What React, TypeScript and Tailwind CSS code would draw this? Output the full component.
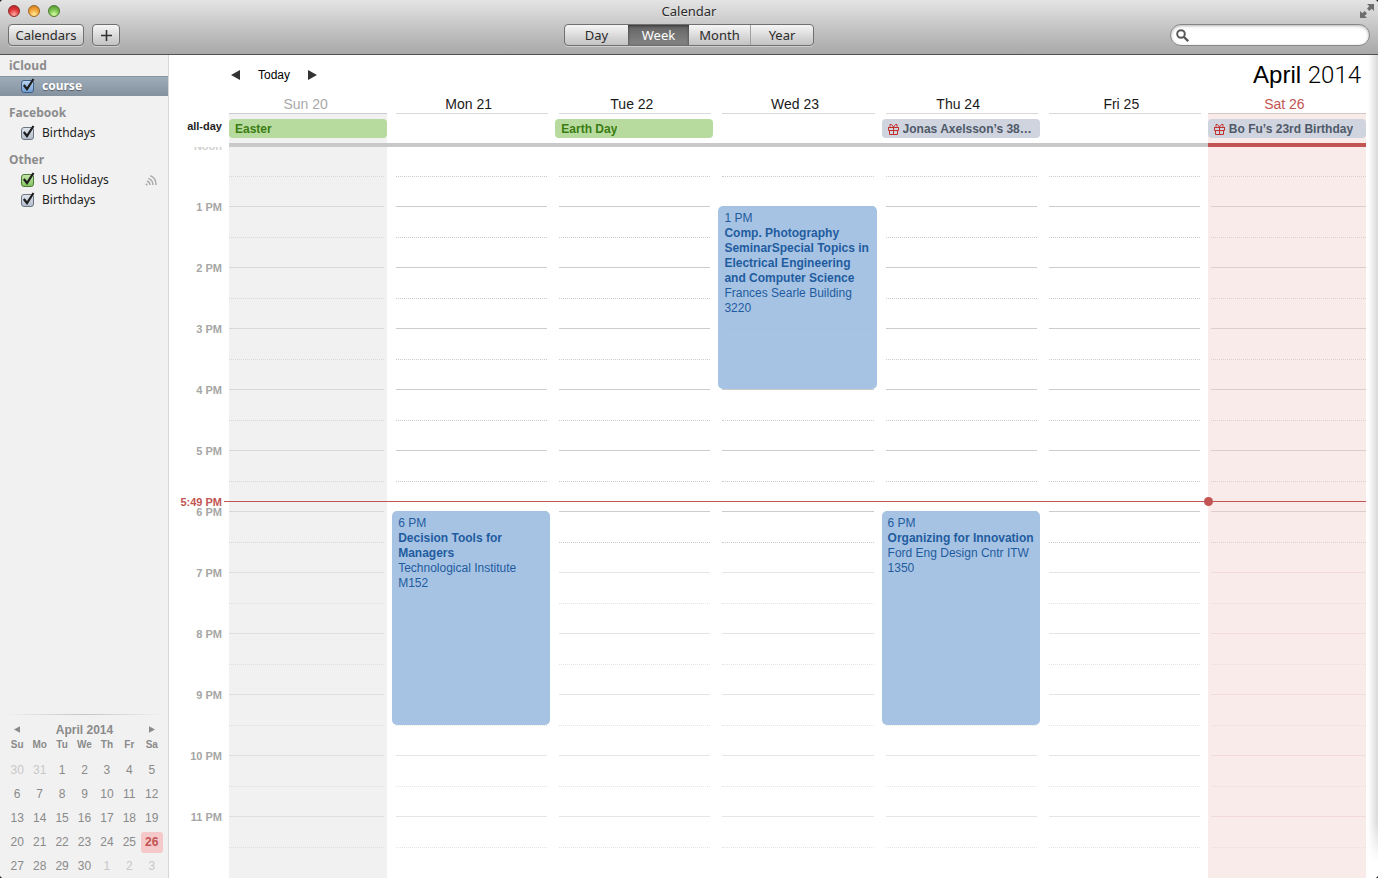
import { useState } from 'react';

interface CalendarItem {
  id: string;
  name: string;
  color: 'blue' | 'gray' | 'green';
  subscribed?: boolean;
}

interface CalendarGroup {
  title: string;
  items: CalendarItem[];
}

interface CalendarEvent {
  start: number;
  end: number;
  time: string;
  title: string;
  location: string;
}

interface Day {
  label: string;
  kind: 'past' | 'normal' | 'today';
  allDay?: { title: string; type: 'holiday' | 'birthday' };
  events: CalendarEvent[];
}

const HOUR_HEIGHT = 61;
const NOW = 5.83;

const groups: CalendarGroup[] = [
  { title: 'iCloud', items: [{ id: 'course', name: 'course', color: 'blue' }] },
  { title: 'Facebook', items: [{ id: 'fb-birthdays', name: 'Birthdays', color: 'gray' }] },
  {
    title: 'Other',
    items: [
      { id: 'us-holidays', name: 'US Holidays', color: 'green', subscribed: true },
      { id: 'birthdays', name: 'Birthdays', color: 'gray' },
    ],
  },
];

const days: Day[] = [
  { label: 'Sun 20', kind: 'past', allDay: { title: 'Easter', type: 'holiday' }, events: [] },
  {
    label: 'Mon 21',
    kind: 'normal',
    events: [
      { start: 6, end: 9.5, time: '6 PM', title: 'Decision Tools for Managers', location: 'Technological Institute M152' },
    ],
  },
  { label: 'Tue 22', kind: 'normal', allDay: { title: 'Earth Day', type: 'holiday' }, events: [] },
  {
    label: 'Wed 23',
    kind: 'normal',
    events: [
      {
        start: 1,
        end: 4,
        time: '1 PM',
        title: 'Comp. Photography SeminarSpecial Topics in Electrical Engineering and Computer Science',
        location: 'Frances Searle Building 3220',
      },
    ],
  },
  {
    label: 'Thu 24',
    kind: 'normal',
    allDay: { title: 'Jonas Axelsson’s 38th Birthday', type: 'birthday' },
    events: [
      { start: 6, end: 9.5, time: '6 PM', title: 'Organizing for Innovation', location: 'Ford Eng Design Cntr ITW 1350' },
    ],
  },
  { label: 'Fri 25', kind: 'normal', events: [] },
  { label: 'Sat 26', kind: 'today', allDay: { title: 'Bo Fu’s 23rd Birthday', type: 'birthday' }, events: [] },
];

const hours = ['Noon', '1 PM', '2 PM', '3 PM', '4 PM', '5 PM', '6 PM', '7 PM', '8 PM', '9 PM', '10 PM', '11 PM'];

const weekdays = ['Su', 'Mo', 'Tu', 'We', 'Th', 'Fr', 'Sa'];
const weeks = [
  [30, 31, 1, 2, 3, 4, 5],
  [6, 7, 8, 9, 10, 11, 12],
  [13, 14, 15, 16, 17, 18, 19],
  [20, 21, 22, 23, 24, 25, 26],
  [27, 28, 29, 30, 1, 2, 3],
];

const checkboxColors = {
  blue: 'border-[#3f5f8a] from-[#b9d3f0] to-[#6f9fd2]',
  gray: 'border-[#6b7480] from-[#dfe4ec] to-[#b3bccb]',
  green: 'border-[#4b7a35] from-[#c3e6a8] to-[#86c463]',
};

const dayBackground = {
  past: 'bg-[#f1f1f1]',
  normal: '',
  today: 'bg-[#f9ebea]',
};

const dayTitleColor = {
  past: 'text-[#a9a9a9]',
  normal: 'text-[#1a1a1a]',
  today: 'text-[#c25453]',
};

const lineMargins = {
  past: 'mr-[3px]',
  normal: 'ml-1 mr-[3px]',
  today: 'ml-[3px]',
};

// lines in the working hours are darker than those in the evening
const lineColors = {
  past: { work: 'border-black/10', evening: 'border-black/8' },
  normal: { work: 'border-black/20', evening: 'border-black/10' },
  today: { work: 'border-[#dfcccd]', evening: 'border-[#f0dadb]' },
};

function Triangle({ direction, className }: { direction: 'left' | 'right'; className: string }) {
  return (
    <svg viewBox="0 0 9 10" className={className} fill="currentColor">
      <path d={direction === 'left' ? 'M9 0v10L0 5z' : 'M0 0v10l9-5z'} />
    </svg>
  );
}

function GiftIcon() {
  return (
    <svg viewBox="0 0 11 12" className="h-3 w-[11px] shrink-0" fill="none" stroke="#c4302c">
      <path d="M1 4.500h9.500M.5 4v3.500h10V4M1.500 7.500v4h8v-4" />
      <path d="M5.500 3v8.500" />
      <path d="M5.500 4L3.500 1.500M5.500 4l2-2.500M2 3.800V1.500h1.500M9 3.800V1.500H7.500" />
    </svg>
  );
}

function FeedIcon() {
  return (
    <svg viewBox="0 0 12 12" className="h-3 w-3" fill="none" stroke="#a9a9a9" strokeWidth="1.400">
      <circle cx="1.600" cy="10.400" r="1" fill="#a9a9a9" stroke="none" />
      <path d="M2 7A4.500 4.500 0 0 1 5 11M3.500 4.300A7 7 0 0 1 7.900 11M5.200 1.700A9.500 9.500 0 0 1 10.900 11" />
    </svg>
  );
}

function TitleBar() {
  const [view, setView] = useState('Week');

  return (
    <header className="h-[55px] shrink-0 border-b border-[#515151] bg-linear-to-b from-[#e4e4e4] to-[#a8a8a8] px-2 text-[#2b2b2b]">
      <div className="grid h-6 grid-cols-[1fr_auto_1fr] items-center pb-0.5">
        <div className="flex gap-2">
          <button aria-label="Close" className="size-3 rounded-full border border-[#8b2b2b] bg-[radial-gradient(circle_at_50%_85%,#ffb0a8,#e0393a_50%,#b01f22)]" />
          <button aria-label="Minimize" className="size-3 rounded-full border border-[#9a6526] bg-[radial-gradient(circle_at_50%_85%,#ffee9a,#f2a53a_50%,#c9741b)]" />
          <button aria-label="Zoom" className="size-3 rounded-full border border-[#4a7a30] bg-[radial-gradient(circle_at_50%_85%,#d8ffa8,#7cc24f_50%,#4a8f2c)]" />
        </div>
        <h1 className="text-[13px] leading-4 [text-shadow:0_1px_0_rgba(255,255,255,0.5)]">Calendar</h1>
        <button aria-label="Full screen" className="-mr-1 justify-self-end text-[#6d6d6d]">
          <svg viewBox="0 0 14 14" className="size-3.5" fill="currentColor">
            <path d="M7 0h7v7l-2.300-2.300L9.400 7 7 4.600l2.300-2.300zM7 14H0V7l2.300 2.300L4.600 7 7 9.400l-2.300 2.300z" />
          </svg>
        </button>
      </div>
      <div className="grid grid-cols-[1fr_auto_1fr] items-center text-[13px]">
        <div className="flex gap-2">
          <button className="h-[22px] w-[76px] rounded border border-[#707070] bg-linear-to-b from-[#f6f6f6] to-[#c2c2c2] leading-5 shadow-[0_1px_0_rgba(255,255,255,0.4)]">
            Calendars
          </button>
          <button aria-label="Add event" className="flex h-[22px] w-7 items-center justify-center rounded border border-[#707070] bg-linear-to-b from-[#f6f6f6] to-[#c2c2c2] shadow-[0_1px_0_rgba(255,255,255,0.4)]">
            <svg viewBox="0 0 11 11" className="size-[11px]" stroke="#333" strokeWidth="1.600">
              <path d="M5.500 0v11M0 5.500h11" />
            </svg>
          </button>
        </div>
        <div className="flex h-[22px] overflow-hidden rounded border border-[#707070] bg-linear-to-b from-[#f6f6f6] to-[#c2c2c2] shadow-[0_1px_0_rgba(255,255,255,0.4)]">
          {['Day', 'Week', 'Month', 'Year'].map((name) => (
            <button
              key={name}
              onClick={() => setView(name)}
              className={`leading-5 ${name === 'Day' || name === 'Year' ? 'w-[63px]' : 'w-[61px]'} ${
                view === name
                  ? 'bg-linear-to-b from-[#646464] to-[#858585] text-white shadow-[inset_0_1px_3px_rgba(0,0,0,0.5)]'
                  : ''
              } ${name === 'Year' ? 'border-l border-[#a0a0a0]' : ''}`}
            >
              {name}
            </button>
          ))}
        </div>
        <label className="flex h-[22px] w-[200px] items-center gap-1 justify-self-end rounded-full border border-[#858585] bg-white px-[5px] shadow-[inset_0_1px_3px_rgba(0,0,0,0.3)]">
          <svg viewBox="0 0 13 13" className="size-[13px] shrink-0" fill="none" stroke="#5a5a5a" strokeWidth="2">
            <circle cx="5" cy="5" r="3.800" />
            <path d="M8 8l4.200 4.200" strokeWidth="2.400" />
          </svg>
          <input type="search" aria-label="Search" className="min-w-0 flex-1 bg-transparent outline-none" />
        </label>
      </div>
    </header>
  );
}

function CalendarRow({ item }: { item: CalendarItem }) {
  const [checked, setChecked] = useState(true);
  const selected = item.id === 'course';

  return (
    <label
      className={`flex h-5 items-center pr-[11px] pl-[21px] ${
        selected
          ? 'bg-linear-to-b from-[#a0adba] to-[#84919f] font-bold text-white shadow-[inset_0_1px_0_#8795a4] [text-shadow:0_1px_1px_rgba(0,0,0,0.4)]'
          : 'text-[#1e1e1e]'
      }`}
    >
      <span className="relative mr-2 flex">
        <input
          type="checkbox"
          checked={checked}
          onChange={() => setChecked(!checked)}
          className={`size-[13px] appearance-none rounded-[3px] border bg-linear-to-b ${checkboxColors[item.color]}`}
        />
        {checked && (
          <svg viewBox="0 0 14 14" className="pointer-events-none absolute -top-0.5 left-0 size-3.5" fill="none" stroke="#1d1d1d" strokeWidth="2.200">
            <path d="M2.800 7l3.200 4L12.500 1" />
          </svg>
        )}
      </span>
      <span className="flex-1">{item.name}</span>
      {item.subscribed && <FeedIcon />}
    </label>
  );
}

function MiniCalendar() {
  return (
    <div className="pr-[5px] pl-1.5 font-['Liberation_Sans',Arial,sans-serif] text-xs text-[#8a8a8a]">
      <div className="h-px bg-linear-to-r from-transparent via-[#c4c4c4] to-transparent" />
      <div className="flex h-[25px] items-center justify-between px-2 pt-1">
        <button aria-label="Previous month">
          <Triangle direction="left" className="h-[7px] w-1.5" />
        </button>
        <h2 className="font-bold">April 2014</h2>
        <button aria-label="Next month">
          <Triangle direction="right" className="h-[7px] w-1.5" />
        </button>
      </div>
      <table className="w-full table-fixed text-center">
        <thead>
          <tr>
            {weekdays.map((day) => (
              <th key={day} className="p-0 pb-2 text-[10px] leading-[10px]">
                {day}
              </th>
            ))}
          </tr>
        </thead>
        <tbody>
          {weeks.map((week, row) => (
            <tr key={row}>
              {week.map((date) => {
                const otherMonth = (row === 0 && date > 7) || (row === 4 && date < 7);
                const today = date === 26;
                return (
                  <td key={date} className={`h-6 p-0 ${otherMonth ? 'text-[#c8c8c8]' : ''}`}>
                    <span className={`block rounded-[3px] leading-[21px] ${today ? 'bg-[#f5c8ca] font-bold text-[#c25453]' : ''}`}>
                      {date}
                    </span>
                  </td>
                );
              })}
            </tr>
          ))}
        </tbody>
      </table>
    </div>
  );
}

function Sidebar() {
  return (
    <aside className="flex w-[169px] shrink-0 flex-col justify-between border-r border-[#d6d6d6] bg-[#f1f1f1] text-xs">
      <div className="flex flex-col gap-[7px] pt-px">
        {groups.map((group) => (
          <section key={group.title}>
            <h2 className="pl-[9px] leading-5 font-bold text-[#8c8c8c]">{group.title}</h2>
            {group.items.map((item) => (
              <CalendarRow key={item.id} item={item} />
            ))}
          </section>
        ))}
      </div>
      <MiniCalendar />
    </aside>
  );
}

function DayHeader({ day }: { day: Day }) {
  return (
    <div>
      <h3 className={`pr-[5px] text-center text-sm leading-[18px] ${dayTitleColor[day.kind]}`}>{day.label}</h3>
      <div className={`h-[30px] ${dayBackground[day.kind]}`}>
        <div className={`h-px bg-black/15 ${day.kind === 'normal' ? 'mr-0.5 ml-1' : ''}`} />
        {day.allDay && (
          <div className="pt-[5px]">
            <div
              className={`flex h-[19px] items-center gap-1 rounded px-1.5 text-xs font-bold ${
                day.allDay.type === 'holiday' ? 'bg-[#b7db9f] text-[#3a7c12]' : 'bg-[#cfd4df] text-[#4f5a69]'
              }`}
            >
              {day.allDay.type === 'birthday' && <GiftIcon />}
              <span className="truncate">{day.allDay.title}</span>
            </div>
          </div>
        )}
      </div>
    </div>
  );
}

function DayColumn({ day }: { day: Day }) {
  const colors = lineColors[day.kind];

  return (
    <div className={`relative ${dayBackground[day.kind]}`}>
      {hours.map((hour, i) => {
        const color = i < 7 ? colors.work : colors.evening;
        return (
          <div key={hour} className={`h-[61px] border-t ${color} ${lineMargins[day.kind]}`}>
            <div className="h-[30px]" />
            <div className={`border-t border-dotted ${color}`} />
          </div>
        );
      })}
      {day.events.map((event) => (
        <article
          key={event.title}
          className="absolute inset-x-0 rounded-[5px] bg-[#a2c0e2]/95 px-1.5 pt-[5px] text-xs leading-[15px] text-[#1f5c9f]"
          style={{ top: event.start * HOUR_HEIGHT, height: Math.ceil((event.end - event.start) * HOUR_HEIGHT) }}
        >
          <p>{event.time}</p>
          <p className="font-bold">{event.title}</p>
          <p>{event.location}</p>
        </article>
      ))}
    </div>
  );
}

function WeekView() {
  const nowTop = Math.round(NOW * HOUR_HEIGHT);

  return (
    <main className="relative flex min-w-0 flex-1 flex-col bg-white pr-3 font-['Liberation_Sans',Arial,sans-serif]">
      <div className="flex h-10 shrink-0 items-center justify-between pr-[5px] pl-[62px]">
        <div className="flex items-center gap-[18px] text-[#333]">
          <button aria-label="Previous week">
            <Triangle direction="left" className="h-2.5 w-[9px]" />
          </button>
          <button className="text-xs text-black">Today</button>
          <button aria-label="Next week">
            <Triangle direction="right" className="h-2.5 w-[9px]" />
          </button>
        </div>
        <h2 className="text-2xl text-black">
          April <span className="font-[Roboto,sans-serif] font-light">2014</span>
        </h2>
      </div>

      <div className="grid shrink-0 grid-cols-[60px_1fr]">
        <span className="self-end pr-[7px] pb-2.5 text-right text-[11px] leading-[14px] font-bold text-[#222]">all-day</span>
        <div className="grid grid-cols-7 gap-x-[5px]">
          {days.map((day) => (
            <DayHeader key={day.label} day={day} />
          ))}
        </div>
        <div className="col-start-2 grid h-1 grid-cols-7 gap-x-[5px] bg-[#c9c9c9]">
          <div className="col-start-7 bg-[#c25453]" />
        </div>
      </div>

      <div className="min-h-0 flex-1 overflow-hidden">
        <div className="relative -mt-0.5 grid min-h-[calc(100%+2px)] grid-cols-[60px_1fr]">
          <div className="text-right text-[11px] leading-[14px] font-bold text-[#a6a6a6]">
            {hours.map((hour) => (
              <div key={hour} className="flex h-[61px] items-start justify-end pr-[7px]">
                <span className={`-mt-1.5 ${hour === 'Noon' ? 'text-[#cfcfcf]' : ''}`}>{hour}</span>
              </div>
            ))}
          </div>
          <div className="grid grid-cols-7 gap-x-[5px]">
            {days.map((day) => (
              <DayColumn key={day.label} day={day} />
            ))}
          </div>

          {/* current time marker */}
          <div className="absolute inset-x-0 flex h-px items-center" style={{ top: nowTop }}>
            <span className="w-[55px] pr-0.5 text-right text-[11px] leading-[14px] font-bold whitespace-nowrap text-[#c25453]">
              5:49 PM
            </span>
            <div className="h-px flex-1 bg-[#c25453]" />
          </div>
          <div
            className="pointer-events-none absolute right-0 left-[60px] grid h-px grid-cols-7 grid-rows-[1px] items-center gap-x-[5px]"
            style={{ top: nowTop }}
          >
            <span className="col-start-7 -ml-1 size-[9px] rounded-full bg-[#c25453]" />
          </div>
        </div>
      </div>

      <div className="pointer-events-none absolute top-0 right-0 bottom-4 w-2.5 bg-linear-to-r from-transparent to-black/15 mask-b-from-95%" />
    </main>
  );
}

export default function App() {
  return (
    <div className="h-screen bg-[#14212a]">
      <div className="flex h-full flex-col overflow-hidden rounded-[4px] bg-white font-['Noto_Sans','Open_Sans',sans-serif]">
        <TitleBar />
        <div className="flex min-h-0 flex-1">
          <Sidebar />
          <WeekView />
        </div>
      </div>
    </div>
  );
}
